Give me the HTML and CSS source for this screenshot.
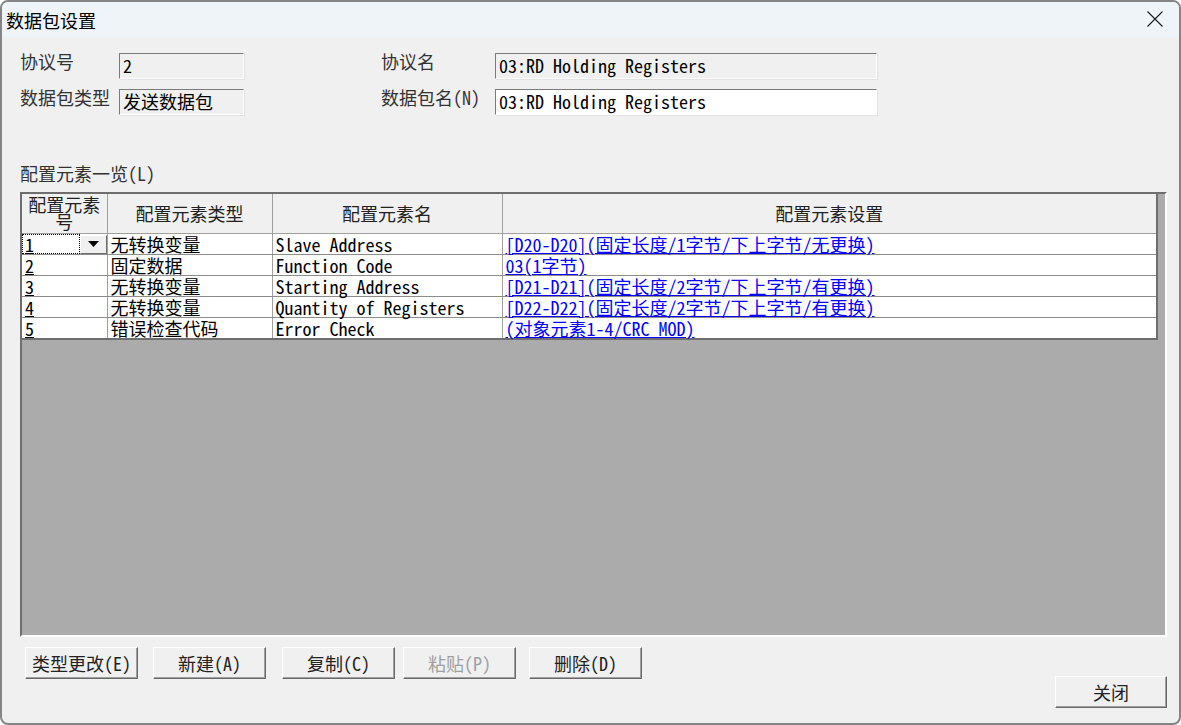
FILE: index.html
```html
<!DOCTYPE html>
<html lang="zh-CN">
<head>
<meta charset="utf-8">
<title>数据包设置</title>
<link rel="stylesheet" href="styles.css">
</head>
<body>
<div class="window">
  <div class="titlebar">
    <span class="title">数据包设置</span>
    <svg class="close-x" width="16" height="16" viewBox="0 0 16 16"><path d="M0.5 0.5 L15.5 15.5 M15.5 0.5 L0.5 15.5" stroke="#1b1b1b" stroke-width="1.1" fill="none"/></svg>
  </div>
  <div class="content">
    <div class="form">
      <span class="lbl">协议号</span>
      <div class="field ro">2</div>
      <span></span>
      <span class="lbl">协议名</span>
      <div class="field ro">03:RD Holding Registers</div>

      <span class="lbl">数据包类型</span>
      <div class="field ro">发送数据包</div>
      <span></span>
      <span class="lbl">数据包名(N)</span>
      <div class="field">03:RD Holding Registers</div>
    </div>

    <div class="section-lbl">配置元素一览(L)</div>

    <div class="grid">
      <table class="tbl">
        <colgroup>
          <col class="c1"><col class="c2"><col class="c3"><col class="c4">
        </colgroup>
        <thead>
          <tr>
            <th class="th-num">配置元素号</th>
            <th>配置元素类型</th>
            <th>配置元素名</th>
            <th>配置元素设置</th>
          </tr>
        </thead>
        <tbody>
          <tr>
            <td class="num-sel"><div class="combo"><span class="combo-val">1</span><span class="combo-btn"><svg width="11" height="6" viewBox="0 0 11 6"><path d="M0 0 H11 L5.5 6 Z" fill="#000"/></svg></span></div></td>
            <td>无转换变量</td>
            <td>Slave Address</td>
            <td><a class="lnk">[D20-D20](固定长度/1字节/下上字节/无更换)</a></td>
          </tr>
          <tr>
            <td><span class="num">2</span></td>
            <td>固定数据</td>
            <td>Function Code</td>
            <td><a class="lnk">03(1字节)</a></td>
          </tr>
          <tr>
            <td><span class="num">3</span></td>
            <td>无转换变量</td>
            <td>Starting Address</td>
            <td><a class="lnk">[D21-D21](固定长度/2字节/下上字节/有更换)</a></td>
          </tr>
          <tr>
            <td><span class="num">4</span></td>
            <td>无转换变量</td>
            <td>Quantity of Registers</td>
            <td><a class="lnk">[D22-D22](固定长度/2字节/下上字节/有更换)</a></td>
          </tr>
          <tr>
            <td><span class="num">5</span></td>
            <td>错误检查代码</td>
            <td>Error Check</td>
            <td><a class="lnk">(对象元素1-4/CRC_MOD)</a></td>
          </tr>
        </tbody>
      </table>
    </div>

    <div class="footer">
      <div class="btns">
        <button class="btn b1">类型更改(E)</button>
        <button class="btn b2">新建(A)</button>
        <button class="btn b3">复制(C)</button>
        <button class="btn b4" disabled>粘贴(P)</button>
        <button class="btn b5">删除(D)</button>
      </div>
      <button class="btn close-btn">关闭</button>
    </div>
  </div>
</div>
</body>
</html>
```

FILE: styles.css
```css
* { box-sizing: border-box; }
html, body { margin: 0; padding: 0; background: #ffffff; }
body {
  width: 1181px;
  height: 725px;
  overflow: hidden;
  font-family: "Noto Sans Mono CJK SC", "Liberation Mono", "Noto Sans CJK SC", monospace;
  font-size: 18px;
}
.window {
  width: 1181px;
  height: 725px;
  border: 2px solid #858585;
  border-radius: 8px;
  background: #f0f0f0;
  display: flex;
  flex-direction: column;
  overflow: hidden;
}
.titlebar {
  height: 35px;
  flex: none;
  background: #eff4f9;
  display: flex;
  align-items: center;
  justify-content: space-between;
  padding: 0 16px 0 4px;
}
.title {
  font-family: "Noto Sans CJK SC", sans-serif;
  font-size: 18px;
  color: #000;
  line-height: 20px;
}
.close-x { display: block; margin-top: -1px; }

.content {
  flex: 1;
  padding: 16px 12px 15px 18px;
  display: flex;
  flex-direction: column;
}
.form {
  display: grid;
  grid-template-columns: 99px 125px 137px 114px 382px;
  grid-template-rows: 26px 26px;
  row-gap: 10px;
  align-items: start;
}
.lbl {
  color: #333;
  line-height: 20px;
  margin-top: -2px;
}
.field {
  height: 26px;
  background: #fff;
  border-top: 1px solid #7a7a7a;
  border-left: 1px solid #7a7a7a;
  border-right: 1px solid #fff;
  border-bottom: 1px solid #fff;
  box-shadow: 1px 1px 0 #e3e3e3;
  padding: 0 3px;
  line-height: 22px;
  color: #000;
  white-space: nowrap;
}
.field.ro { background: #f0f0f0; }

.section-lbl {
  margin-top: 48px;
  color: #333;
  line-height: 20px;
  height: 29px;
}

.grid {
  height: 445px;
  background: #ababab;
  border-top: 2px solid #6e6e6e;
  border-left: 2px solid #6e6e6e;
  border-right: 2px solid #ffffff;
  border-bottom: 2px solid #ffffff;
  padding-right: 8px;
}
.tbl {
  width: 1135px;
  border-collapse: collapse;
  table-layout: fixed;
  background: #fff;
  border-right: 2px solid #6e6e6e;
  border-bottom: 2px solid #6e6e6e;
}
.c1 { width: 85px; }
.c2 { width: 165px; }
.c3 { width: 230px; }
.c4 { width: 655px; }
.tbl th {
  height: 39px;
  background: #f0f0f0;
  font-weight: normal;
  color: #222;
  border: 1px solid #a0a0a0;
  border-top: none;
  padding: 0 4px;
  line-height: 18px;
  text-align: center;
}
.tbl th:first-child { border-left: none; }
.tbl th.th-num { padding: 0 2px; line-height: 17px; }
.tbl td {
  height: 21px;
  padding: 0 3px;
  border: 1px solid #8c8c8c;
  border-left: 1px solid #a0a0a0;
  border-right: 1px solid #a0a0a0;
  line-height: 20px;
  white-space: nowrap;
  color: #000;
  vertical-align: middle;
}
.tbl td:first-child { border-left: none; }
.num { text-decoration: underline; }
.lnk { color: #0000ff; text-decoration: underline; }

.tbl td.num-sel { padding: 0; }
.combo {
  display: flex;
  height: 20px;
}
.combo-val {
  flex: 1;
  border: 1px dotted #000;
  padding-left: 2px;
  line-height: 18px;
  text-decoration: underline;
}
.combo-btn {
  width: 27px;
  height: 19px;
  margin-top: 1px;
  background: #f0f0f0;
  border-top: 1px solid #fff;
  border-left: 1px solid #fff;
  border-right: 1px solid #6e6e6e;
  border-bottom: 1px solid #6e6e6e;
  display: flex;
  align-items: center;
  justify-content: center;
}
.combo-btn svg { display: block; }

.footer {
  margin-top: 10px;
  display: flex;
  justify-content: space-between;
  align-items: flex-start;
}
.btns { display: flex; }
.btn {
  width: 113px;
  height: 32px;
  background: #f0f0f0;
  font-family: inherit;
  font-size: 18px;
  color: #222;
  border-top: 1px solid #ffffff;
  border-left: 1px solid #ffffff;
  border-right: 1px solid #696969;
  border-bottom: 1px solid #696969;
  box-shadow: inset -1px -1px 0 #a0a0a0;
  padding: 0;
  line-height: 28px;
}
.btn:disabled { color: #a0a0a0; }
.b1 { margin-left: 5px; }
.b2 { margin-left: 15px; }
.b3 { margin-left: 16px; }
.b4 { margin-left: 8px; }
.b5 { margin-left: 13px; }
.close-btn { margin-top: 29px; width: 112px; }
```
